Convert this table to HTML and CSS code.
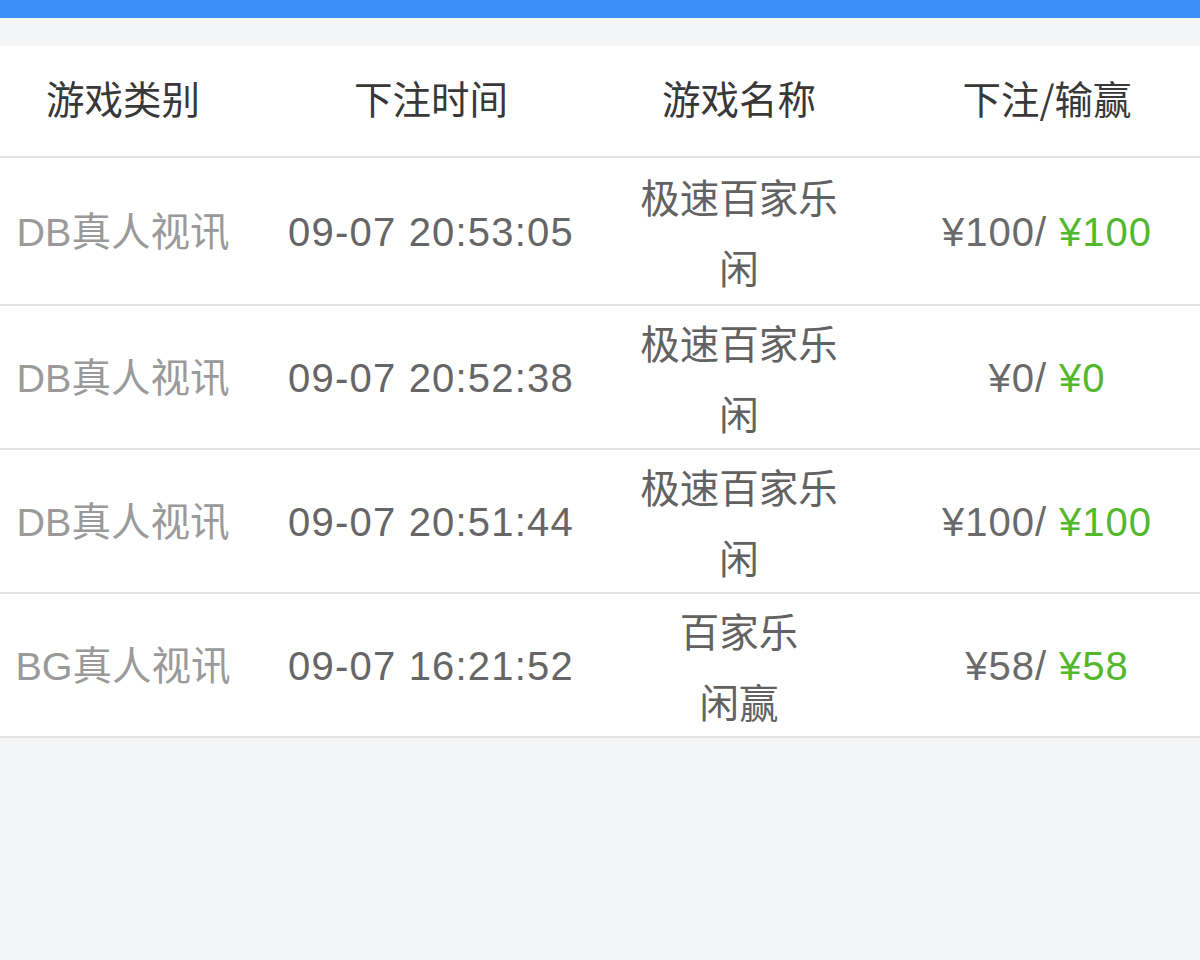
FILE: index.html
```html
<!DOCTYPE html>
<html lang="zh">
<head>
<meta charset="utf-8">
<title>投注记录</title>
<link rel="stylesheet" href="styles.css">
</head>
<body>
<div class="topbar"></div>
<div class="page">
  <div class="table">
    <div class="row head">
      <div class="cell">游戏类别</div>
      <div class="cell">下注时间</div>
      <div class="cell">游戏名称</div>
      <div class="cell">下注/输赢</div>
    </div>
    <div class="row first">
      <div class="cell type">DB真人视讯</div>
      <div class="cell time">09-07 20:53:05</div>
      <div class="cell name">极速百家乐<br>闲</div>
      <div class="cell amt">¥100/ <span class="win">¥100</span></div>
    </div>
    <div class="row">
      <div class="cell type">DB真人视讯</div>
      <div class="cell time">09-07 20:52:38</div>
      <div class="cell name">极速百家乐<br>闲</div>
      <div class="cell amt">¥0/ <span class="win">¥0</span></div>
    </div>
    <div class="row">
      <div class="cell type">DB真人视讯</div>
      <div class="cell time">09-07 20:51:44</div>
      <div class="cell name">极速百家乐<br>闲</div>
      <div class="cell amt">¥100/ <span class="win">¥100</span></div>
    </div>
    <div class="row">
      <div class="cell type">BG真人视讯</div>
      <div class="cell time">09-07 16:21:52</div>
      <div class="cell name">百家乐<br>闲赢</div>
      <div class="cell amt">¥58/ <span class="win">¥58</span></div>
    </div>
  </div>
</div>
</body>
</html>
```

FILE: styles.css
```css
html, body {
  margin: 0;
  padding: 0;
  background: #f4f5f7;
  overflow: hidden;
}
body {
  width: 1200px;
  height: 960px;
  font-family: "Liberation Sans", "Noto Sans CJK SC", sans-serif;
}
.topbar {
  height: 18px;
  background: #3a8ef6;
}
.page {
  padding-top: 28px;
}
.table {
  background: #fff;
  width: 1232px;
  margin-left: -31px;
}
.row {
  display: grid;
  grid-template-columns: repeat(4, 308px);
  align-items: center;
  border-bottom: 2px solid #e2e2e2;
  height: 142px;
}
.row.first {
  height: 146px;
}
.row.head {
  height: 110px;
}
.cell {
  text-align: center;
  font-size: 39.5px;
  line-height: 71px;
  color: #666;
  white-space: nowrap;
}
.head .cell {
  color: #383838;
  font-family: "Noto Sans CJK SC", sans-serif;
  font-size: 38.5px;
  line-height: 50px;
  padding-bottom: 9px;
}
.type {
  color: #9a9a9a;
  padding-top: 3px;
}
.time {
  color: #666;
  font-size: 40px;
  letter-spacing: 1.2px;
  padding-top: 3px;
}
.name {
  font-family: "Noto Sans CJK SC", sans-serif;
  color: #626262;
  line-height: 71px;
}
.amt {
  color: #6a6a6a;
  font-size: 40px;
  letter-spacing: 1px;
  padding-top: 3px;
}
.win {
  color: #52b82c;
}
```
